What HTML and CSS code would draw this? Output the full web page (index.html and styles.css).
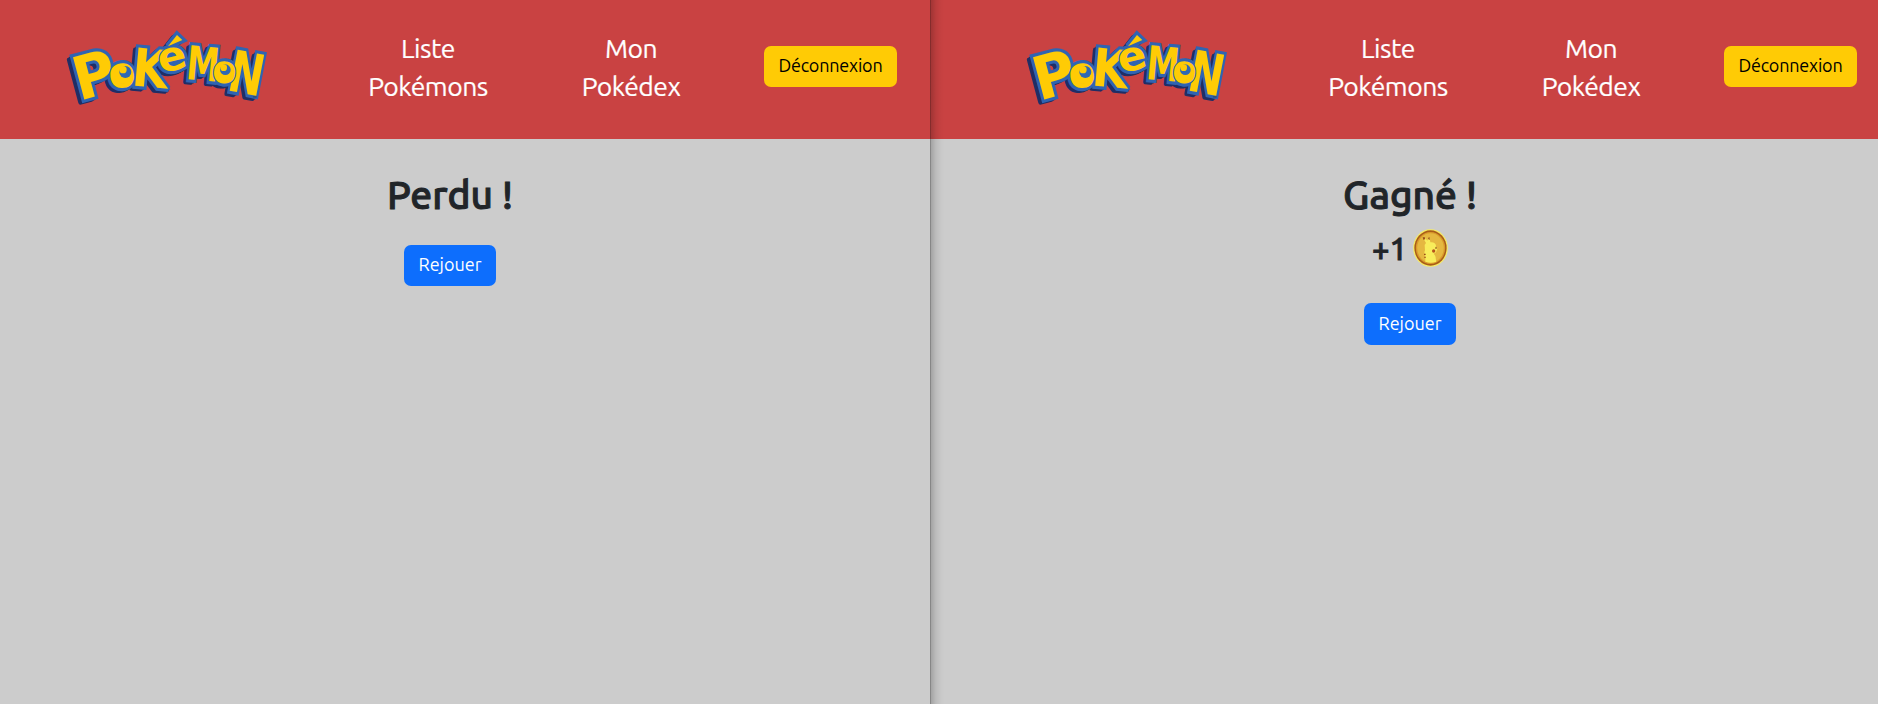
FILE: index.html
```
<!DOCTYPE html>
<html lang="fr">
<head>
<meta charset="utf-8">
<title>Pokémon</title>
<link rel="stylesheet" href="styles.css">
</head>
<body>
<svg class="sprites" width="0" height="0" aria-hidden="true">
  <defs>
    <g id="word">
      <text transform="translate(134 226) rotate(-15) scale(.96 1)" font-size="180">P</text>
      <text transform="translate(282 201) rotate(5) scale(.88 1)" font-size="158">K</text>
      <text transform="translate(360 150) rotate(-14) scale(1.04 1)" font-size="122">e</text>
      <path d="M339 79L366 45L382 60Z"/>
      <text transform="translate(440 181) rotate(5) scale(.7 1)" font-size="140">M</text>
      <text transform="translate(564 220) rotate(11) scale(.72 1)" font-size="172">N</text>
      <text transform="translate(206 202) rotate(-8) scale(.96 1)" font-size="98">O</text>
      <text transform="translate(506 189) rotate(4) scale(.96 1)" font-size="88">O</text>
    </g>
    <g id="pokemon">
      <use href="#word" class="logo-depth" x="-11" y="8"/>
      <use href="#word" class="logo-depth" x="-5" y="4"/>
      <use href="#word" class="logo-edge"/>
      <use href="#word" class="logo-face"/>
      <circle class="logo-eye" cx="203" cy="166" r="26"/>
      <circle class="logo-iris" cx="211" cy="156" r="18"/>
      <circle class="logo-eye" cx="204" cy="149" r="11"/>
      <circle class="logo-eye" cx="507" cy="157" r="24"/>
      <circle class="logo-iris" cx="511" cy="149" r="16"/>
      <circle class="logo-eye" cx="506" cy="143" r="10"/>
      <text class="logo-tm" x="594" y="235">TM</text>
    </g>
  </defs>
</svg>
<div class="screens">
  <section class="screen">
    <header class="navbar">
      <svg class="logo" viewBox="0 0 660 285" role="img" aria-label="Pokémon"><use href="#pokemon"/></svg>
      <a class="link link-list">Liste<br>Pokémons</a>
      <a class="link link-dex">Mon<br>Pokédex</a>
      <button class="btn btn-logout">Déconnexion</button>
    </header>
    <main class="result">
      <h1 class="title">Perdu !</h1>
      <button class="btn btn-replay">Rejouer</button>
    </main>
  </section>
  <section class="screen screen-right">
    <header class="navbar">
      <svg class="logo" viewBox="0 0 660 285" role="img" aria-label="Pokémon"><use href="#pokemon"/></svg>
      <a class="link link-list">Liste<br>Pokémons</a>
      <a class="link link-dex">Mon<br>Pokédex</a>
      <button class="btn btn-logout">Déconnexion</button>
    </header>
    <main class="result">
      <h1 class="title">Gagné !</h1>
      <div class="reward">
        <span class="gain">+1</span>
        <svg class="coin" viewBox="0 0 105 114">
          <ellipse cx="52.500" cy="57" rx="52" ry="56.500" fill="#f7ec62"/>
          <ellipse cx="52.500" cy="57" rx="48.500" ry="53" fill="#a95d18"/>
          <ellipse cx="52.500" cy="57" rx="44" ry="48" fill="#d99a2b"/>
          <ellipse cx="52.500" cy="57" rx="40" ry="44" fill="#e5b840"/>
          <path d="M30 26L34 24L43 35L47 25L50 28L52 40Q65 38 69 49L68 55L73 59L69 70L62 74Q69 81 68 88L70 98Q54 104 37 98V81Q32 72 36 64L35 48L39 42Z" fill="#f8ed5b"/>
          <path d="M29 25L35 24L37 31L31 32ZM45 26L50 25L50 33L46 31ZM33 74H38V78H33ZM34 83H38V87H34Z" fill="#9b501a"/>
          <circle cx="62" cy="66" r="5" fill="#b7541d"/>
          <path d="M67 55h4v4h-4z" fill="#84501d"/>
        </svg>
      </div>
      <button class="btn btn-replay">Rejouer</button>
    </main>
  </section>
</div>
</body>
</html>
```
FILE: styles.css
```
* { box-sizing: border-box; }
body {
  margin: 0;
  background: #ccc;
  color: #212529;
  font-family: Ubuntu, "Noto Sans", sans-serif;
}
.sprites { position: absolute; }
.screens { display: flex; height: 704px; overflow: hidden; }
.screen { width: 930px; background: #ccc; flex: none; }
.screen-right { position: relative; width: 948px; }
.screen-right::before {
  content: "";
  position: absolute;
  inset: 0 auto 0 0;
  width: 15px;
  background: linear-gradient(90deg, rgba(0,0,0,.34) 0 1px, rgba(0,0,0,.2) 1px, rgba(0,0,0,.08) 6px, rgba(0,0,0,.02) 11px, transparent);
}
.navbar {
  display: flex;
  align-items: flex-start;
  height: 139px;
  padding: 20px 0 0 55px;
  background: #c94242;
}
.screen-right .navbar { padding-left: 85px; }
.logo { width: 220px; height: 95px; flex: none; }
#word text { font-family: "DejaVu Sans", sans-serif; font-weight: 700; text-anchor: middle; }
.logo-depth { fill: #202e65; stroke: #202e65; stroke-width: 15; stroke-linejoin: round; }
.logo-edge { fill: #3068b4; stroke: #3064b2; stroke-width: 19; stroke-linejoin: miter; stroke-miterlimit: 2; }
.logo-face { fill: #ffcb05; stroke: #3064b2; stroke-width: 7; paint-order: stroke; }
.logo-eye { fill: #ffcb05; }
.logo-iris { fill: #3068b4; }
.logo-tm { font: 8px "DejaVu Sans", sans-serif; fill: #333; }
.link {
  width: 150px;
  padding-top: 9px;
  color: #fff;
  font-size: 26.500px;
  line-height: 38px;
  letter-spacing: -.5px;
  text-align: center;
  -webkit-text-stroke: .2px #fff;
}
.link-list { margin-left: 78px; }
.link-dex { margin-left: 53px; }
.btn {
  display: block;
  padding: 0 0 2px;
  border: 0;
  border-radius: 7px;
  font-family: inherit;
  font-size: 18px;
  line-height: 24px;
  white-space: nowrap;
}
.btn-logout {
  width: 133px;
  height: 41px;
  margin: 26px 0 0 58px;
  padding-bottom: 4px;
  background: #ffcb05;
  color: #000;
  letter-spacing: -.2px;
}
.btn-replay {
  width: 92px;
  height: 41px;
  padding-bottom: 4px;
  background: #0d6efd;
  color: #fff;
}
.result {
  display: flex;
  flex-direction: column;
  align-items: center;
  width: 900px;
  padding-top: 32px;
}
.screen-right .result { margin-left: 30px; }
.title {
  margin: 0 0 26px;
  font-size: 39px;
  font-weight: 500;
  line-height: 48px;
  -webkit-text-stroke: 1px #212529;
}
.screen-right .title { margin-bottom: 8px; }
.reward {
  display: flex;
  align-items: flex-start;
  gap: 6px;
  height: 76px;
  padding-top: 2px;
}
.gain { font-size: 31px; font-weight: 500; line-height: 40px; -webkit-text-stroke: .8px #212529; }
.coin { width: 35px; height: 38px; }
.screen-right .btn-replay { height: 42px; padding-bottom: 2px; }
```
